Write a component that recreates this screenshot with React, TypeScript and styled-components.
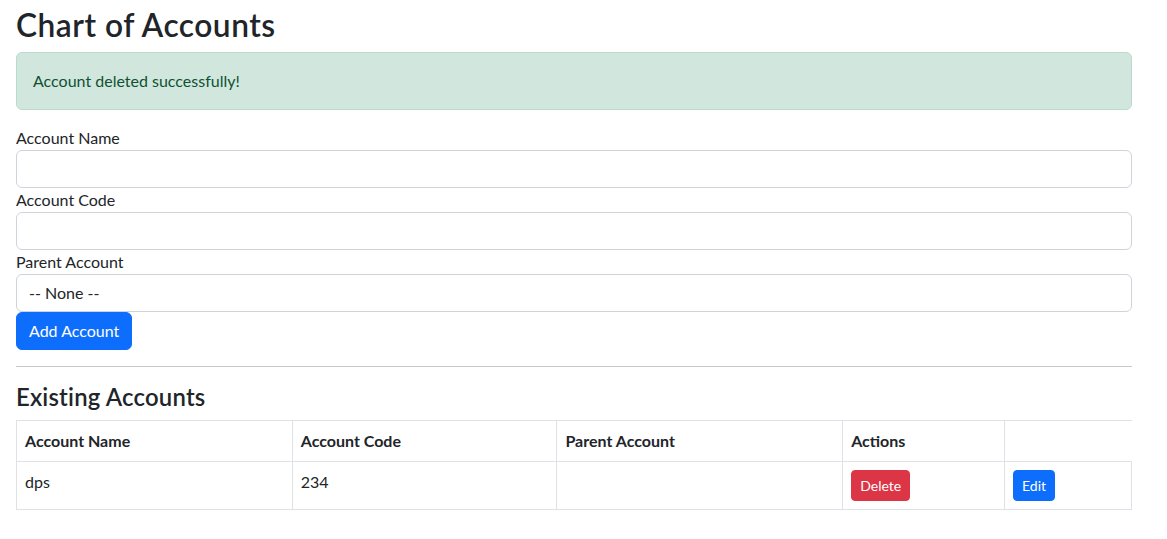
import React from "react";
import styled, { createGlobalStyle } from "styled-components";

const Global = createGlobalStyle`
  html, body { margin: 0; padding: 0; background: #fff; }
  body {
    font-family: "Segoe UI", Lato, "Liberation Sans", sans-serif;
    font-size: 16px;
    line-height: 1.5;
    color: #212529;
  }
  * { box-sizing: border-box; }
`;

const Page = styled.div`
  width: 1116px;
  margin-left: 16px;
  padding-top: 6px;
`;

const Title = styled.h2`
  margin: 0 0 8px;
  font-size: 31.7px;
  font-weight: 600;
  letter-spacing: 0.5px;
  line-height: 1.2;
`;

const Alert = styled.div`
  background: #d1e7dd;
  border: 1px solid #badbcc;
  color: #0f5132;
  border-radius: 6px;
  padding: 16px;
  margin-bottom: 16px;
`;

const Form = styled.form`
  display: flex;
  flex-direction: column;
  align-items: stretch;
`;

const Label = styled.label`
  display: block;
`;

const Input = styled.input`
  display: block;
  width: 100%;
  height: 38px;
  padding: 6px 12px;
  font: inherit;
  color: #212529;
  background: #fff;
  border: 1px solid #ced4da;
  border-radius: 6px;
  outline: none;
`;

const Select = styled.select`
  display: block;
  width: 100%;
  height: 38px;
  padding: 6px 36px 6px 12px;
  font: inherit;
  color: #212529;
  background: #fff;
  border: 1px solid #ced4da;
  border-radius: 6px;
  appearance: none;
  outline: none;
`;

const Button = styled.button<{ $variant?: "primary" | "danger"; $small?: boolean }>`
  display: inline-block;
  align-self: flex-start;
  font-family: inherit;
  font-size: ${(p) => (p.$small ? "14px" : "16px")};
  line-height: 1.5;
  padding: ${(p) => (p.$small ? "4px 8px" : "6px 12px")};
  border-radius: ${(p) => (p.$small ? "4px" : "6px")};
  color: #fff;
  border: 1px solid ${(p) => (p.$variant === "danger" ? "#dc3545" : "#0d6efd")};
  background: ${(p) => (p.$variant === "danger" ? "#dc3545" : "#0d6efd")};
  cursor: pointer;
`;

const Rule = styled.hr`
  margin: 16px 0;
  border: 0;
  border-top: 1px solid #c8c9ca;
`;

const SubTitle = styled.h4`
  margin: 0 0 8px;
  font-size: 23.9px;
  font-weight: 600;
  letter-spacing: 0.2px;
  line-height: 1.2;
`;

const Table = styled.table`
  width: 1116px;
  border-collapse: collapse;
  margin-bottom: 16px;
`;

const Row = styled.tr`
  border-top: 1px solid #dee2e6;
  border-bottom: 1px solid #dee2e6;
`;

const Th = styled.th`
  text-align: left;
  font-weight: 700;
  padding: 8px;
  border-left: 1px solid #dee2e6;
  border-right: 1px solid #dee2e6;
  vertical-align: bottom;
`;

const Td = styled.td<{ $w?: number }>`
  padding: 8px;
  border-left: 1px solid #dee2e6;
  border-right: 1px solid #dee2e6;
  vertical-align: top;
  width: ${(p) => (p.$w ? `${p.$w}px` : "auto")};
`;

export default function App() {
  return (
    <>
      <Global />
      <Page>
        <Title>Chart of Accounts</Title>
        <Alert>Account deleted successfully!</Alert>
        <Form onSubmit={(e) => e.preventDefault()}>
          <Label>Account Name</Label>
          <Input type="text" />
          <Label>Account Code</Label>
          <Input type="text" />
          <Label>Parent Account</Label>
          <Select defaultValue="">
            <option value="">-- None --</option>
          </Select>
          <Button $variant="primary" type="submit">Add Account</Button>
        </Form>
        <Rule />
        <SubTitle>Existing Accounts</SubTitle>
        <Table>
          <thead>
            <Row>
              <Th>Account Name</Th>
              <Th>Account Code</Th>
              <Th>Parent Account</Th>
              <Th>Actions</Th>
            </Row>
          </thead>
          <tbody>
            <Row>
              <Td $w={276}>dps</Td>
              <Td $w={265}>234</Td>
              <Td $w={286}></Td>
              <Td $w={162}>
                <Button $variant="danger" $small>Delete</Button>
              </Td>
              <Td $w={127}>
                <Button $variant="primary" $small>Edit</Button>
              </Td>
            </Row>
          </tbody>
        </Table>
      </Page>
    </>
  );
}
